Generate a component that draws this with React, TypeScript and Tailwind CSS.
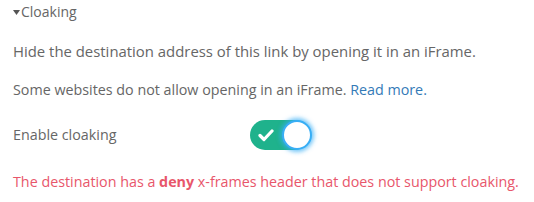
export default function App() {
  return (
    <div className="min-h-[202px] w-[534px] bg-white px-[13px] pt-[1px] font-['Open_Sans',sans-serif] text-[14.3px] text-[#666]">
      <div className="flex items-center text-[14px] leading-[22px] text-[#666]">
        <svg width="7" height="5" viewBox="0 0 7 5" className="mr-[1px]">
          <path d="M0 0 L7 0 L3.5 5 Z" fill="#555" />
        </svg>
        <span>Cloaking</span>
      </div>
      <p className="mt-[18px] text-[14.9px] leading-[20px]">
        Hide the destination address of this link by opening it in an iFrame.
      </p>
      <p className="mt-[19px] leading-[20px]">
        Some websites do not allow opening in an iFrame.{" "}
        <a href="#" className="text-[#337ab7]">Read more.</a>
      </p>
      <div className="mt-[18px] flex h-[34px] items-center">
        <span className="w-[237px] leading-[20px]">Enable cloaking</span>
        <button
          type="button"
          className="relative h-[30px] w-[60px] rounded-full bg-[#1fb28c]"
        >
          <svg width="16" height="13" viewBox="0 0 16 13" className="absolute left-[8px] top-[9px]">
            <path d="M2 6.5 L6 10.5 L14 2" fill="none" stroke="white" strokeWidth="3.2" strokeLinecap="round" strokeLinejoin="round" />
          </svg>
          <span className="absolute right-[-2px] top-[0px] h-[30px] w-[30px] rounded-full border-2 border-[#38aef5] bg-white shadow-[0_0_4px_2px_rgba(56,174,245,0.7)]" />
        </button>
      </div>
      <p className="mt-[20px] leading-[20px] text-[#e8566b]">
        The destination has a <b className="font-bold">deny</b> x-frames header that does not support cloaking.
      </p>
    </div>
  );
}
